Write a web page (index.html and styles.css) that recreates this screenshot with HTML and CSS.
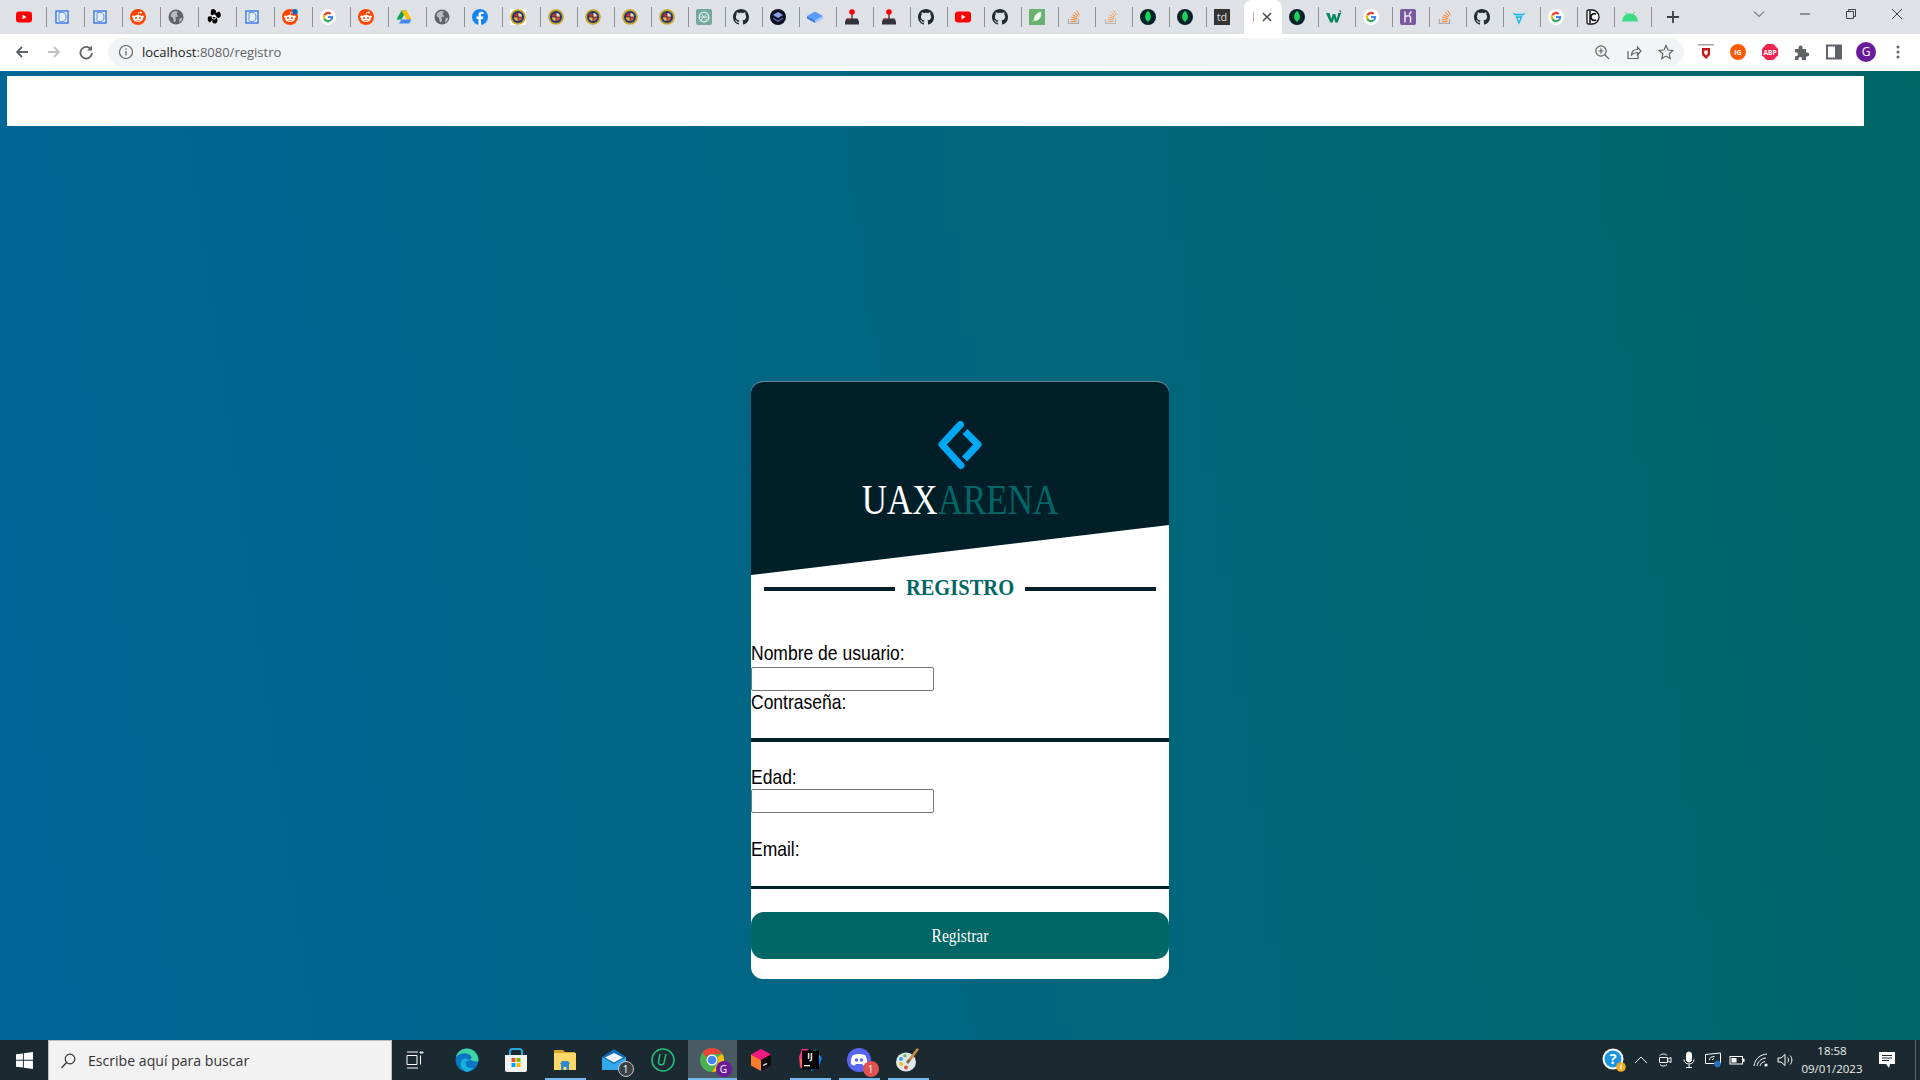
FILE: index.html
```html
<!DOCTYPE html>
<html lang="es">
<head>
<meta charset="utf-8">
<title>UAX Arena - Registro</title>
<link rel="stylesheet" href="styles.css">
</head>
<body>
<svg class="defs" aria-hidden="true">
  <symbol id="yt" viewBox="0 0 16 16"><rect y="2.500" width="16" height="11" rx="3" fill="#f00"/><path d="M6.500 5.500l4 2.500-4 2.500z" fill="#fff"/></symbol>
  <symbol id="doc" viewBox="0 0 16 16"><rect x="2" y="2" width="12" height="12" fill="#e6ecf6" stroke="#1a63f0" stroke-width="1.200"/><path d="M5 3.500h3.500C11 3.500 12 5.500 12 8s-1 4.500-3.500 4.500H6C5 12.500 5 11.500 5 11z" fill="none" stroke="#5a86c8" stroke-width=".9"/></symbol>
  <symbol id="reddit" viewBox="0 0 16 16"><circle cx="8" cy="8" r="8" fill="#ff4500"/><ellipse cx="8" cy="9.500" rx="5" ry="3.600" fill="#fff"/><circle cx="3.400" cy="7.800" r="1.200" fill="#fff"/><circle cx="12.600" cy="7.800" r="1.200" fill="#fff"/><circle cx="11" cy="3.600" r="1" fill="#fff"/><path d="M8 6l.7-2.600 2.200.3" fill="none" stroke="#fff" stroke-width=".7"/><circle cx="6" cy="9" r="1" fill="#ff4500"/><circle cx="10" cy="9" r="1" fill="#ff4500"/><path d="M6 11.200c1 .8 3 .8 4 0" fill="none" stroke="#ff4500" stroke-width=".7"/></symbol>
  <symbol id="redditdot" viewBox="0 0 16 16"><use href="#reddit"/><circle cx="13" cy="2.800" r="2.800" fill="#0a66c2"/></symbol>
  <symbol id="globe" viewBox="0 0 16 16"><circle cx="8" cy="8" r="7.500" fill="#5f6368"/><path d="M3.500 4l3-2 3.500.5-1.500 2.500 2 2.500-3 .5 .5 4-2 1.500-1-4.500-2.500-2zM11.500 9.500l2.500-1-.5 3-2.500 2.500z" fill="#b9bcc0"/></symbol>
  <symbol id="pin" viewBox="0 0 16 16"><path d="M7.500 7C4 6 4 3 6 0c3 0 4.500 1.500 4 4l3-1.500c2.500 2 2.500 5 0 6.500l-3.500-1c2 1.500 3 4 .5 6.500-3 .5-4.500-1.500-3.500-4L4 13.500C1.500 12.500 1 9.500 2.500 7.500z" fill="#000"/><path d="M8 5.500c1 0 2.500 1.500 2.500 2.500S9 10.500 8 10.500 5.500 9 5.500 8 7 5.500 8 5.500z" fill="#fff"/><path d="M6.500 8a1.500 1.500 0 0 0 3 0" fill="#000"/></symbol>
  <symbol id="google" viewBox="0 0 16 16"><circle cx="8" cy="8" r="8" fill="#fff"/><path d="M8 2.800a5.200 5.200 0 0 1 3.500 1.400L9.900 5.800A3 3 0 0 0 5.200 7L3.400 5.600A5.200 5.200 0 0 1 8 2.800z" fill="#ea4335"/><path d="M3.400 5.600L5.200 7a3 3 0 0 0 0 2L3.400 10.400a5.200 5.200 0 0 1 0-4.800z" fill="#fbbc05"/><path d="M3.400 10.400L5.200 9a3 3 0 0 0 4.700 1.400l1.700 1.400A5.200 5.200 0 0 1 3.400 10.400z" fill="#34a853"/><path d="M13.200 7H8v2.100h2.900a2.600 2.600 0 0 1-1 1.300l1.700 1.400c1.200-1.100 1.900-3 1.600-4.800z" fill="#4285f4"/></symbol>
  <symbol id="drive" viewBox="0 0 16 16"><path d="M5.500 1.500h5L8 6 5.500 10.500h-5z" fill="#0f9d58"/><path d="M5.500 1.500h5l5 9h-5z" fill="#fbbc04"/><path d="M3 14.500l2.500-4h10l-2.500 4z" fill="#4285f4"/></symbol>
  <symbol id="fb" viewBox="0 0 16 16"><circle cx="8" cy="8" r="8" fill="#1685f0"/><path d="M9 16V10h2l.4-2.400H9V6.200c0-.8.3-1.200 1.300-1.200h1.200V3a9 9 0 0 0-1.900-.2C7.700 2.800 6.500 4 6.500 5.900v1.700H4.500V10h2v6z" fill="#fff"/></symbol>
  <symbol id="crest" viewBox="0 0 16 16"><circle cx="8" cy="8" r="7.800" fill="#c9a21e"/><circle cx="8" cy="8" r="6" fill="#1c3a80"/><path d="M8 4a4 4 0 0 1 4 4H8z" fill="#e7dcc0"/><path d="M8 4a4 4 0 0 0-4 4h4z" fill="#c8332f"/><path d="M8 12a4 4 0 0 0 4-4H8z" fill="#d8563a"/><path d="M8 12a4 4 0 0 1-4-4h4z" fill="#e9b84a"/><path d="M8 3.500v9M3.500 8h9" stroke="#3a2030" stroke-width=".7"/></symbol>
  <symbol id="crestw" viewBox="0 0 16 16"><rect width="16" height="16" fill="#fff"/><use href="#crest"/></symbol>
  <symbol id="gpt" viewBox="0 0 16 16"><rect width="16" height="16" rx="2" fill="#74aa9c"/><circle cx="8" cy="8" r="4.800" fill="none" stroke="#e6f2ef" stroke-width="1.200"/><path d="M5 4.500l5.500 6.500M11 4.500L5 11M3.500 8h9" stroke="#e6f2ef" stroke-width=".8"/></symbol>
  <symbol id="gh" viewBox="0 0 16 16"><path d="M8 0C3.580 0 0 3.580 0 8c0 3.540 2.290 6.530 5.470 7.590.4.070.55-.17.55-.38 0-.19-.01-.82-.01-1.490-2.010.37-2.530-.49-2.690-.94-.09-.23-.48-.94-.82-1.130-.28-.15-.68-.52-.01-.53.63-.01 1.080.58 1.230.82.720 1.210 1.870.87 2.330.66.070-.52.280-.87.510-1.070-1.780-.2-3.640-.89-3.640-3.950 0-.87.310-1.590.820-2.150-.08-.2-.36-1.020.080-2.120 0 0 .67-.21 2.200.820.640-.18 1.320-.27 2-.27s1.360.09 2 .27c1.530-1.040 2.200-.82 2.200-.82.440 1.100.160 1.920.080 2.120.510.560.820 1.270.820 2.150 0 3.070-1.870 3.750-3.650 3.950.290.250.540.730.540 1.480 0 1.070-.01 1.930-.01 2.200 0 .21.150.460.550.380A8.010 8.010 0 0 0 16 8c0-4.420-3.580-8-8-8z" fill="#24292f"/></symbol>
  <symbol id="layers" viewBox="0 0 16 16"><circle cx="8" cy="8" r="8" fill="#0b1020"/><path d="M8 3l5 3-5 3-5-3z" fill="#8a9fe8"/><path d="M3 8.500l5 3 5-3v1.500l-5 3-5-3z" fill="#5a6fc0"/></symbol>
  <symbol id="book" viewBox="0 0 16 16"><path d="M0 7l8-4.500L16 7l-8 4.500z" fill="#5a9cf8"/><path d="M0 7l8 4.500V14L0 9.500z" fill="#2f78e8"/><path d="M16 7l-8 4.500V14l8-4.500z" fill="#9cc6fb"/></symbol>
  <symbol id="joy" viewBox="0 0 16 16"><rect x="7.200" y="4" width="1.600" height="7" fill="#555"/><circle cx="8" cy="3" r="2.800" fill="#f00"/><path d="M2.500 9.500h11l1.500 3v3H1v-3z" fill="#30333a"/><rect x="3" y="9" width="2.500" height="1.500" fill="#e33"/></symbol>
  <symbol id="leaf" viewBox="0 0 16 16"><rect width="16" height="16" fill="#67b26f"/><path d="M12 3c.5 5-2 9-6.500 8.500C4.500 8 7 4 12 3zM3.500 13L7 8.500" fill="#f2f8f2" stroke="#f2f8f2" stroke-width=".6"/></symbol>
  <symbol id="so" viewBox="0 0 16 16"><path d="M2.500 10v4.500h10V10" fill="none" stroke="#a8a8a8" stroke-width="1.200"/><path d="M4.500 12.600h6M4.700 10.400l5.800.6M5.300 8l5.600 1.500M6.500 5.700l5 2.700M8.300 3.500l4 3.800M10.700 1.500l2.600 4.700" stroke="#f48024" stroke-width="1"/></symbol>
  <symbol id="sofade" viewBox="0 0 16 16"><path d="M2.500 10v4.500h10V10" fill="none" stroke="#b8b8b8" stroke-width="1.200"/><path d="M4.500 12.600h6M4.700 10.400l5.800.6M5.300 8l5.600 1.500M6.500 5.700l5 2.700M8.300 3.500l4 3.800M10.700 1.500l2.600 4.700" stroke="#f0a060" stroke-width="1"/></symbol>
  <symbol id="mongo" viewBox="0 0 16 16"><circle cx="8" cy="8" r="8" fill="#03232b"/><path d="M8 1.800c2.500 2.500 3.200 5 2.700 7.200-.4 1.700-1.600 2.800-2.500 3.500l-.2 2-.3-2C6.800 11.800 5.600 10.700 5.300 9 4.800 6.800 5.500 4.300 8 1.800z" fill="#13d85a"/></symbol>
  <symbol id="heroku" viewBox="0 0 16 16"><rect width="16" height="16" rx="2" fill="#79589f"/><path d="M5 2.500v11M5 8c2-1.500 5.500-2 5.500.5v5M9 5.500l2.500-3" fill="none" stroke="#efe9f5" stroke-width="1.500"/></symbol>
  <symbol id="bull" viewBox="0 0 16 16"><path d="M2 3.500c1 1 2 1.300 3 1.300h6c1 0 2-.3 3-1.300-.2 2-1.200 3-3 3H5c-1.800 0-2.800-1-3-3z" fill="#17b7ea"/><path d="M5.500 8h5L8 14z" fill="none" stroke="#17b7ea" stroke-width="1.400"/></symbol>
  <symbol id="cc" viewBox="0 0 16 16"><path d="M3.500 1h3.500a7 7 0 0 1 0 14H3.500a1.500 1.500 0 0 1-1.500-1.500v-11A1.500 1.500 0 0 1 3.500 1z" fill="#fff" stroke="#111" stroke-width="1.300"/><path d="M11 5.300a3.300 3.300 0 1 0 0 5.400" fill="none" stroke="#111" stroke-width="1.800"/><path d="M5 2v12" stroke="#111" stroke-width="1.500"/></symbol>
  <symbol id="android" viewBox="0 0 16 16"><path d="M0 12.500a8 8 0 0 1 16 0z" fill="#3ddc84"/><path d="M3.500 3l2 3M12.500 3l-2 3" stroke="#3ddc84" stroke-width="1"/></symbol>
  <symbol id="winlogo" viewBox="0 0 18 18"><path d="M0 2.500L7.300 1.500V8.300H0zM8.300 1.400L18 0V8.300H8.300zM0 9.300H7.300V16.500L0 15.500zM8.300 9.300H18V18L8.300 16.600z" fill="#fff"/></symbol>
</svg>

<div class="tabstrip">
  <span class="tab wide"><svg class="fav"><use href="#yt"/></svg></span>
  <span class="tab wide"><svg class="fav"><use href="#doc"/></svg></span>
  <span class="tab wide"><svg class="fav"><use href="#doc"/></svg></span>
  <span class="tab wide"><svg class="fav"><use href="#reddit"/></svg></span>
  <span class="tab wide"><svg class="fav"><use href="#globe"/></svg></span>
  <span class="tab wide"><svg class="fav"><use href="#pin"/></svg></span>
  <span class="tab wide"><svg class="fav"><use href="#doc"/></svg></span>
  <span class="tab wide"><svg class="fav"><use href="#redditdot"/></svg></span>
  <span class="tab wide"><svg class="fav"><use href="#google"/></svg></span>
  <span class="tab wide"><svg class="fav"><use href="#reddit"/></svg></span>
  <span class="tab wide"><svg class="fav"><use href="#drive"/></svg></span>
  <span class="tab wide"><svg class="fav"><use href="#globe"/></svg></span>
  <span class="tab wide"><svg class="fav"><use href="#fb"/></svg></span>
  <span class="tab wide"><svg class="fav"><use href="#crestw"/></svg></span>
  <span class="tab"><svg class="fav"><use href="#crest"/></svg></span>
  <span class="tab"><svg class="fav"><use href="#crest"/></svg></span>
  <span class="tab"><svg class="fav"><use href="#crest"/></svg></span>
  <span class="tab"><svg class="fav"><use href="#crest"/></svg></span>
  <span class="tab"><svg class="fav"><use href="#gpt"/></svg></span>
  <span class="tab"><svg class="fav"><use href="#gh"/></svg></span>
  <span class="tab"><svg class="fav"><use href="#layers"/></svg></span>
  <span class="tab"><svg class="fav"><use href="#book"/></svg></span>
  <span class="tab"><svg class="fav"><use href="#joy"/></svg></span>
  <span class="tab"><svg class="fav"><use href="#joy"/></svg></span>
  <span class="tab"><svg class="fav"><use href="#gh"/></svg></span>
  <span class="tab"><svg class="fav"><use href="#yt"/></svg></span>
  <span class="tab"><svg class="fav"><use href="#gh"/></svg></span>
  <span class="tab"><svg class="fav"><use href="#leaf"/></svg></span>
  <span class="tab"><svg class="fav"><use href="#so"/></svg></span>
  <span class="tab"><svg class="fav"><use href="#sofade"/></svg></span>
  <span class="tab"><svg class="fav"><use href="#mongo"/></svg></span>
  <span class="tab"><svg class="fav"><use href="#mongo"/></svg></span>
  <span class="tab last"><svg class="fav" viewBox="0 0 16 16"><rect y="-2" width="16" height="20" rx="1" fill="#333"/><text x="8" y="12" class="svgt td-t">td</text></svg></span>
  <span class="tab-active"><i class="tab-mark"></i><svg class="tab-x" viewBox="0 0 10 10"><path d="M1 1l8 8M9 1l-8 8"/></svg></span>
  <span class="tab"><svg class="fav"><use href="#mongo"/></svg></span>
  <span class="tab"><svg class="fav" viewBox="0 0 16 16"><path d="M0 4h3.500l1.800 6 1.500-5h2.400l1.500 5 1.700-6H15l-3.200 9.500H9.300L8 9l-1.300 4.500H4.200z" fill="#04875c"/><text x="14" y="5" class="svgt w3-t">3</text></svg></span>
  <span class="tab"><svg class="fav"><use href="#google"/></svg></span>
  <span class="tab"><svg class="fav"><use href="#heroku"/></svg></span>
  <span class="tab"><svg class="fav"><use href="#so"/></svg></span>
  <span class="tab"><svg class="fav"><use href="#gh"/></svg></span>
  <span class="tab"><svg class="fav"><use href="#bull"/></svg></span>
  <span class="tab"><svg class="fav"><use href="#google"/></svg></span>
  <span class="tab"><svg class="fav"><use href="#cc"/></svg></span>
  <span class="tab"><svg class="fav"><use href="#android"/></svg></span>
  <svg class="newtab" viewBox="0 0 12 12"><path d="M6 0v12M0 6h12"/></svg>
  <div class="winctrl">
    <svg class="winbtn" viewBox="0 0 12 12"><path d="M1 3.500l5 5 5-5"/></svg>
    <svg class="winbtn" viewBox="0 0 12 12"><path d="M1 6h10"/></svg>
    <svg class="winbtn" viewBox="0 0 12 12"><path d="M1.500 3.500h7v7h-7zM3.500 3.500v-2h7v7h-2"/></svg>
    <svg class="winbtn" viewBox="0 0 12 12"><path d="M1 1l10 10M11 1L1 11"/></svg>
  </div>
</div>

<div class="toolbar">
  <span class="tbtn"><svg class="ico" viewBox="0 0 16 16"><path d="M14 8H3M8 3L3 8l5 5"/></svg></span>
  <span class="tbtn"><svg class="ico dim" viewBox="0 0 16 16"><path d="M2 8h11M8 3l5 5-5 5"/></svg></span>
  <span class="tbtn"><svg class="ico" viewBox="0 0 16 16"><path d="M13 5.500A5.800 5.800 0 1 0 14 9"/><path class="solid" d="M14 1.500v5h-5z"/></svg></span>
  <div class="omnibox">
    <span class="tbtn"><svg class="ico thin" viewBox="0 0 16 16"><circle cx="8" cy="8" r="6.500"/><path d="M8 7v4.500M8 4.200v1.600"/></svg></span>
    <span class="url">localhost<span class="url-dim">:8080/registro</span></span>
    <span class="tbtn"><svg class="ico thin" viewBox="0 0 16 16"><circle cx="7" cy="7" r="5.200"/><path d="M11 11l4 4M7 4.500v5M4.500 7h5"/></svg></span>
    <span class="tbtn"><svg class="ico thin" viewBox="0 0 16 16"><path d="M2 7v7.500h10V11M5.500 11c0-3.500 2.500-5.500 6-5.500V3L15 7l-3.500 4V8.500c-2.500 0-4.500.8-6 2.500z"/></svg></span>
    <span class="tbtn"><svg class="ico thin" viewBox="0 0 16 16"><path d="M8 1.500l2 4.500 4.800.5-3.600 3.200 1 4.800L8 12.100l-4.200 2.400 1-4.800-3.600-3.200L6 6z"/></svg></span>
  </div>
  <span class="tbtn"><svg class="ext" viewBox="0 0 16 16"><rect y="0" width="16" height="1.500" fill="#a3a3a3"/><path d="M4 4h8v7l-4 4-4-4z" fill="#c8181e"/><path d="M6.300 6.500h3.400v3l-1.700 2-1.700-2z" fill="#fff"/></svg></span>
  <span class="tbtn"><svg class="ext" viewBox="0 0 16 16"><circle cx="8" cy="8" r="8" fill="#ff5a00"/><text x="8" y="10.500" class="svgt ig-t">IG</text></svg></span>
  <span class="tbtn"><svg class="ext" viewBox="0 0 16 16"><path d="M4.700 0h6.600L16 4.700v6.600L11.300 16H4.700L0 11.300V4.700z" fill="#f0244e"/><text x="8" y="10.500" class="svgt abp-t">ABP</text></svg></span>
  <span class="tbtn"><svg class="ext" viewBox="0 0 16 16"><path d="M1 5h3.500V3.500a2 2 0 0 1 4 0V5H12v3.500h1.200a2 2 0 0 1 0 4H12V16H8v-1.500a1.800 1.800 0 0 0-3.500 0V16H1v-3.700h1a2 2 0 0 0 0-4H1z" fill="#5f6368"/></svg></span>
  <span class="tbtn"><svg class="ext" viewBox="0 0 16 16"><path d="M1 1.500h14v13H1z" fill="#fff" stroke="#5f6368" stroke-width="2"/><path d="M9 1.500h6v13H9z" fill="#5f6368"/></svg></span>
  <span class="tbtn"><span class="avatar">G</span></span>
  <span class="tbtn"><svg class="ext" viewBox="0 0 16 16"><circle cx="8" cy="3" r="1.500" fill="#5f6368"/><circle cx="8" cy="8" r="1.500" fill="#5f6368"/><circle cx="8" cy="13" r="1.500" fill="#5f6368"/></svg></span>
</div>

<main class="page">
  <div class="topbar"></div>
  <section class="card">
    <header class="card-head">
      <svg class="logo" viewBox="0 0 50 50"><path class="logo-l" d="M25.500 3.500L7 23.500l19 21"/><path class="logo-r" d="M30 10.500l13 13-13.500 14.500"/></svg>
      <div class="brand"><span class="brand-a">UAX</span><span class="brand-b">ARENA</span></div>
    </header>
    <div class="title-row"><i class="rule"></i><h1 class="title">REGISTRO</h1><i class="rule"></i></div>
    <form class="form">
      <label class="lbl" for="u">Nombre de usuario:</label>
      <input class="box" id="u" type="text">
      <label class="lbl lbl-tight" for="p">Contraseña:</label>
      <input class="under" id="p" type="password">
      <label class="lbl lbl-edad" for="e">Edad:</label>
      <input class="box box-edad" id="e" type="text">
      <label class="lbl lbl-email" for="m">Email:</label>
      <input class="under under-thin" id="m" type="email">
      <button class="submit" type="button"><span class="submit-t">Registrar</span></button>
    </form>
  </section>
</main>

<footer class="taskbar">
  <span class="start"><svg class="winlogo"><use href="#winlogo"/></svg></span>
  <div class="search"><svg class="search-ico" viewBox="0 0 16 16"><circle cx="10" cy="6" r="4.800"/><path d="M6.500 9.500L1.500 15"/></svg><span>Escribe aquí para buscar</span></div>
  <span class="taskview"><svg class="tv" viewBox="0 0 18 18"><path d="M1 1h11M1 4.500h10v9H1zM14.500 4.500v9M1 17h11M14 1h3v1h-3z"/></svg></span>
  <span class="app"><svg class="appico" viewBox="0 0 24 24"><circle cx="12" cy="12" r="11.500" fill="#0c74c4"/><path d="M23.500 13C24 6 18 .5 12 .5 7 .5 2 4 1 9c3-4 10-5 14-2 2 1.500 2 4-.5 4.500 3 1.500 8 3 9 1.500z" fill="#3ed6a0"/><path d="M11 23.500C6 22 4 15 7.500 11.500c2.500-2 6.500-1 6.500 1.500-3-.5-4 1-3.500 3 .7 3 4 5 8 3.500-2 3-5 4.500-7.500 4.500z" fill="#14b4d8"/></svg></span>
  <span class="app"><svg class="appico" viewBox="0 0 24 24"><path d="M1 7h22v15a2 2 0 0 1-2 2H3a2 2 0 0 1-2-2z" fill="#f3f3f3"/><path d="M6 7V3.500A2.500 2.500 0 0 1 8.500 1h7A2.500 2.500 0 0 1 18 3.500V7" fill="none" stroke="#27a9e0" stroke-width="2"/><rect x="7.500" y="10" width="4" height="4" fill="#f25022"/><rect x="12.500" y="10" width="4" height="4" fill="#7fba00"/><rect x="7.500" y="15" width="4" height="4" fill="#00a4ef"/><rect x="12.500" y="15" width="4" height="4" fill="#ffb900"/></svg></span>
  <span class="app app-on"><svg class="appico" viewBox="0 0 24 24"><path d="M1 2h9l2 2h10v18H1z" fill="#d9a52e"/><path d="M1 5h22v17H1z" fill="#fcd868"/><path d="M8 22v-6h8v6h-2.500v-3h-3v3z" fill="#2f88d0"/><path d="M7 16l2-3h6l2 3z" fill="#2f88d0"/></svg></span>
  <span class="app"><svg class="appico" viewBox="0 0 24 24"><path d="M0 9L12 1l12 8v13H0z" fill="#0f6cbd"/><path d="M0 9l12 7 12-7v13H0z" fill="#33a8ee"/><path d="M3 9.500L12 5l9 4.500-9 5z" fill="#eef6fb"/></svg><span class="badge badge-gray">1</span></span>
  <span class="app"><svg class="appico" viewBox="0 0 24 24"><circle cx="12" cy="12" r="11" fill="none" stroke="#22c07a" stroke-width="1.500"/><path d="M9 6l-1.500 8c-.5 3 4.500 4 5.500 1l2-9" fill="none" stroke="#22c07a" stroke-width="1.500"/></svg></span>
  <span class="app app-chrome"><svg class="appico" viewBox="0 0 24 24"><circle cx="12" cy="12" r="12" fill="#4caf50"/><path d="M12 0a12 12 0 0 1 10.400 6H12a6 6 0 0 0-5.500 3.500L2.500 4.500A12 12 0 0 1 12 0z" fill="#ea4335"/><path d="M22.400 6A12 12 0 0 1 12 24l5-8.500A6 6 0 0 0 17.500 9z" fill="#fbbc05"/><circle cx="12" cy="12" r="5.500" fill="#fff"/><circle cx="12" cy="12" r="4.300" fill="#4285f4"/></svg><span class="badge badge-purple">G</span></span>
  <span class="app"><svg class="appico" viewBox="0 0 24 24"><path d="M12 1l10 5.500v11L12 23 2 17.500v-11z" fill="#a01060"/><path d="M2 6.500L12 12v11L2 17.500z" fill="#ff7a2a"/><path d="M2 6.500L12 1l10 5.500L12 12z" fill="#f0197d"/><path d="M12 12l10-5.500v11L12 23z" fill="#0a0a0a"/><path d="M14 17.500l4-2" stroke="#fff" stroke-width="1.300"/></svg></span>
  <span class="app app-on"><svg class="appico" viewBox="0 0 24 24"><path d="M1 9l3-8h6l-5 20-3-2z" fill="#ff318c"/><path d="M2 12l2-2 2 10-2 1z" fill="#fe7e2b"/><path d="M17 1l7 9-4 11-7 2z" fill="#087cfa"/><path d="M15 2l5 1 2 7-7 1z" fill="#21d789"/><rect x="4" y="2.500" width="17" height="19" fill="#000"/><text x="12" y="11" class="svgt ij-t">IJ</text><rect x="6" y="17" width="6" height="1.300" fill="#fff"/></svg></span>
  <span class="app app-on"><svg class="appico" viewBox="0 0 24 24"><circle cx="12" cy="12" r="12" fill="#5865f2"/><path d="M5.500 7.500c4-2 9-2 13 0 1.500 3 2 6 1.500 8.500-1.500 1-3 1.500-4 1.500l-.8-1.500H8.800L8 17.500c-1 0-2.500-.5-4-1.500-.5-2.500 0-5.500 1.500-8.500z" fill="#fff"/><circle cx="9.500" cy="12" r="1.700" fill="#5865f2"/><circle cx="14.500" cy="12" r="1.700" fill="#5865f2"/></svg><span class="badge badge-red">1</span></span>
  <span class="app app-on"><svg class="appico" viewBox="0 0 24 24"><ellipse cx="10" cy="14" rx="10" ry="9.500" fill="#dfe7ea"/><circle cx="5" cy="11" r="2" fill="#3aa0e8"/><circle cx="9" cy="7.800" r="1.800" fill="#6cc24a"/><circle cx="5" cy="16" r="2" fill="#f0c020"/><circle cx="10" cy="19.500" r="2" fill="#e8503a"/><path d="M21 0l2 1.500-8 11-3-1z" fill="#c88a40"/><path d="M12 11l3 1.500-3 3.500-2-2z" fill="#7a6a5a"/></svg></span>
  <div class="tray">
    <span class="help"><svg class="help-ico" viewBox="0 0 24 24"><circle cx="11" cy="11" r="10.500" fill="#fff"/><circle cx="11" cy="11" r="8.500" fill="#1b95e0"/><text x="11" y="16" class="svgt help-t">?</text><circle cx="19" cy="19" r="4.800" fill="#f6a821"/><rect x="18.300" y="16.500" width="1.400" height="5" fill="#fff"/></svg></span>
    <span class="tray-i"><svg class="tr" viewBox="0 0 16 16"><path d="M2 11l6-6 6 6"/></svg></span>
    <span class="tray-i"><svg class="tr" viewBox="0 0 16 16"><path d="M3 3.500c1-2 6-2 7 0M3 12.500c1 2 6 2 7 0M2.500 5.500h8v5h-8zM11 7l3-1.500v5L11 9"/></svg></span>
    <span class="tray-i"><svg class="tr tr-solid" viewBox="0 0 16 16"><rect x="5.500" y="0" width="5" height="10" rx="2.500"/><path class="tr-line" d="M3 7.500c0 6 10 6 10 0M8 12.500V15.500M5 15.500h6"/></svg></span>
    <span class="tray-i"><svg class="tr" viewBox="0 0 16 16"><path d="M.5 2.500l15-1.500v10.500H.5zM4.500 8c0-2.500 2-3.500 5-3.500M7 8l2-1.500"/><circle class="tr-dot" cx="12.500" cy="12" r="3.200"/></svg></span>
    <span class="tray-i"><svg class="tr" viewBox="0 0 16 16"><rect x="1" y="4.500" width="12.500" height="7.500"/><rect class="tr-fill" x="2.500" y="6" width="5" height="4.500"/><rect class="tr-fill" x="14" y="6.500" width="1.500" height="3.500"/></svg></span>
    <span class="tray-i"><svg class="tr" viewBox="0 0 16 16"><path d="M1 14C2 7 7 2.500 14 2M4 14c.8-4.500 4-7.500 9-8M7 14c.5-2.500 2.200-4 5-4.500"/><circle class="tr-dot2" cx="13" cy="13" r="1.600"/></svg></span>
    <span class="tray-i"><svg class="tr" viewBox="0 0 16 16"><path d="M1 6h3l4-3.500v11L4 10H1zM10.500 5.500c1.500 1.500 1.500 3.500 0 5M13 3.500c2.500 2.500 2.500 6.500 0 9"/></svg></span>
    <div class="clock"><span>18:58</span><span>09/01/2023</span></div>
    <span class="notif"><svg class="notif-ico" viewBox="0 0 18 18"><path d="M1 1h16v12h-5l-1 4-3-4H1z" fill="#fff"/><path d="M4 4.500h10M4 7h10M4 9.500h7" stroke="#1b2a31" stroke-width="1"/></svg></span>
    <i class="desk"></i>
  </div>
</footer>
</body>
</html>
```

FILE: styles.css
```css
* { box-sizing: border-box; }
html, body { margin: 0; height: 100%; }
body { display: flex; flex-direction: column; height: 100vh; overflow: hidden; font-family: "Liberation Sans", Arial, sans-serif; }
.defs { width: 0; height: 0; position: absolute; }
.svgt { font-family: "Open Sans", sans-serif; text-anchor: middle; }
.td-t { font-size: 11px; fill: #ddd; }
.w3-t { font-size: 5px; fill: #333; }
.ig-t { font-size: 7px; font-weight: 700; fill: #fff; }
.abp-t { font-size: 6.500px; font-weight: 700; fill: #fff; }
.ij-t { font-size: 8px; font-weight: 700; fill: #fff; }
.help-t { font-size: 15px; font-weight: 700; fill: #fff; }

/* tab strip */
.tabstrip { height: 34px; flex: none; background: #dee1e6; display: flex; align-items: center; padding-left: 8.500px; }
.tab { flex: none; width: 37px; height: 34px; display: flex; align-items: center; padding-left: 7px; position: relative; }
.tab.wide { width: 38px; }
.tab::after { content: ""; position: absolute; right: 0; top: 7px; height: 20px; width: 1px; background: #8d9094; }
.tab.last::after { display: none; }
.fav { width: 16px; height: 16px; display: block; }
.tab-active { flex: none; width: 38px; height: 34px; background: #fff; border-radius: 8px 8px 0 0; display: flex; align-items: center; padding-left: 9px; gap: 8px; }
.tab-mark { width: 1px; height: 10px; background: #d8a898; }
.tab-x { width: 10px; height: 10px; fill: none; stroke: #45484c; stroke-width: 1.500; }
.newtab { width: 12px; height: 12px; margin-left: 15px; fill: none; stroke: #3c4043; stroke-width: 1.800; flex: none; }
.winctrl { margin-left: auto; display: flex; }
.winbtn { width: 46px; height: 12px; margin-top: -6px; fill: none; stroke: #3c4043; stroke-width: 1; }

/* toolbar */
.toolbar { height: 37px; flex: none; background: #fff; display: flex; align-items: center; padding: 0 6px 1px; }
.tbtn { flex: none; width: 32px; height: 28px; display: flex; align-items: center; justify-content: center; }
.ico { width: 16px; height: 16px; fill: none; stroke: #5f6368; stroke-width: 1.800; }
.ico.dim { stroke: #bdc1c6; }
.ico.thin { stroke-width: 1.200; }
.solid { fill: #5f6368; stroke: none; }
.omnibox { flex: 1; height: 28px; margin: 0 6px; padding: 0 2px; background: #f1f3f4; border-radius: 14px; display: flex; align-items: center; }
.url { flex: 1; font-family: "Open Sans", sans-serif; font-size: 13px; color: #202124; }
.url-dim { color: #5f6368; }
.ext { width: 16px; height: 16px; display: block; }
.avatar { width: 20px; height: 20px; border-radius: 50%; background: #6a1b9a; color: #fff; font-family: "Open Sans", sans-serif; font-size: 12px; line-height: 20px; text-align: center; }

/* page */
.page { flex: 1; min-height: 0; background: linear-gradient(82deg, #006699, #006666); padding-top: 5px; }
.topbar { width: 1857px; height: 50px; margin-left: 7px; background: #fff; }
.card { width: 418px; height: 598px; margin: 255px auto 0; background: #fff; border-top: 1px solid #5f8a96; border-radius: 12px; overflow: hidden; }
.card-head { height: 193px; padding-top: 39px; background: #001f29; clip-path: polygon(0 0, 100% 0, 100% 143px, 0 193px); display: flex; flex-direction: column; align-items: center; }
.logo { width: 50px; height: 50px; flex: none; fill: none; stroke: #00a8f5; stroke-width: 7; stroke-linejoin: round; }
.logo-l { stroke-linecap: round; }
.logo-r { stroke-linecap: butt; }
.brand { margin-top: 12px; font-family: "Liberation Serif", "Times New Roman", serif; font-size: 35px; line-height: 36px; transform: scaleY(1.180); }
.brand-a { color: #fff; }
.brand-b { color: #006666; }
.title-row { height: 25px; padding: 0 13px; display: flex; align-items: center; gap: 11px; }
.rule { flex: 1; height: 4px; margin-top: 3px; background: #001f29; }
.title { margin: 0; font-family: "Liberation Serif", "Times New Roman", serif; font-size: 20.500px; font-weight: 700; line-height: 25px; color: #006666; transform: scaleY(1.150); }
.form { padding-top: 41px; display: flex; flex-direction: column; align-items: flex-start; }
.lbl { display: block; height: 24px; font-size: 17.500px; line-height: 24px; color: #000; transform: scaleY(1.150); }
.lbl-tight { margin-top: -1px; }
.lbl-edad { margin-top: 23px; }
.lbl-email { margin-top: 24px; }
.box { width: 183px; height: 24px; margin-top: 2px; padding: 1px 2px; border: 1px solid #767676; border-radius: 2px; background: #fff; }
.box-edad { margin-top: 0; }
.under { width: 100%; height: 28px; padding: 0; border: 0; border-bottom: 4px solid #001f29; background: transparent; outline: none; }
.under-thin { border-bottom-width: 3px; }
.submit { width: 100%; height: 47px; margin-top: 23px; border: 0; border-radius: 13px; background: #006666; color: #fff; font-family: "Liberation Serif", "Times New Roman", serif; font-size: 15.500px; }
.submit-t { display: inline-block; transform: scaleY(1.150); }

/* taskbar */
.taskbar { height: 40px; flex: none; background: #1b2a31; display: flex; align-items: center; color: #fff; }
.start { flex: none; width: 48px; height: 40px; display: flex; align-items: center; justify-content: center; }
.winlogo { width: 17px; height: 17px; }
.search { flex: none; width: 344px; height: 40px; background: #f2f2f2; border: 1px solid #bbb; border-bottom: 0; display: flex; align-items: center; color: #333; font-family: "Open Sans", sans-serif; font-size: 14.100px; }
.search-ico { width: 16px; height: 16px; margin-left: 11px; margin-right: 12px; fill: none; stroke: #333; stroke-width: 1.200; flex: none; }
.taskview { flex: none; width: 50.500px; height: 40px; display: flex; align-items: center; padding-left: 14px; }
.tv { width: 18px; height: 18px; fill: none; stroke: #fff; stroke-width: 1; }
.app { flex: none; width: 49px; height: 40px; display: flex; align-items: center; justify-content: center; position: relative; }
.appico { width: 24px; height: 24px; display: block; }
.app-on::after, .app-chrome::after { content: ""; position: absolute; left: 4px; right: 4px; bottom: 0; height: 2px; background: #76b9ed; }
.app-chrome { background: #4a5a62; }
.app-chrome::after { left: 0; right: 0; }
.badge { position: absolute; right: 5px; bottom: 3px; width: 16px; height: 16px; border-radius: 50%; font-family: "Open Sans", sans-serif; font-size: 10px; line-height: 16px; text-align: center; color: #fff; }
.badge-gray { background: #3a4248; border: 1px solid #ccc; line-height: 14px; }
.badge-purple { background: #6a1b9a; }
.badge-red { background: #e0524e; }
.tray { margin-left: auto; display: flex; align-items: center; height: 40px; }
.help { width: 30px; display: flex; justify-content: center; }
.help-ico { width: 24px; height: 24px; }
.tray-i { flex: none; width: 24px; display: flex; justify-content: center; }
.tr { width: 16px; height: 16px; fill: none; stroke: #fff; stroke-width: 1; overflow: visible; }
.tr-solid { fill: #fff; }
.tr-line { fill: none; }
.tr-dot { fill: #2a6fc0; stroke: none; }
.tr-fill { fill: #fff; stroke: none; }
.tr-dot2 { fill: #fff; stroke: none; }
.clock { flex: none; width: 70px; display: flex; flex-direction: column; align-items: center; font-family: "Open Sans", sans-serif; font-size: 11.500px; line-height: 18px; color: #eee; }
.notif { flex: none; width: 40px; display: flex; justify-content: center; }
.notif-ico { width: 18px; height: 18px; }
.desk { flex: none; width: 13px; height: 40px; position: relative; }
.desk::before { content: ""; position: absolute; left: 8px; top: 0; bottom: 0; width: 1px; background: #5a666c; }
```
